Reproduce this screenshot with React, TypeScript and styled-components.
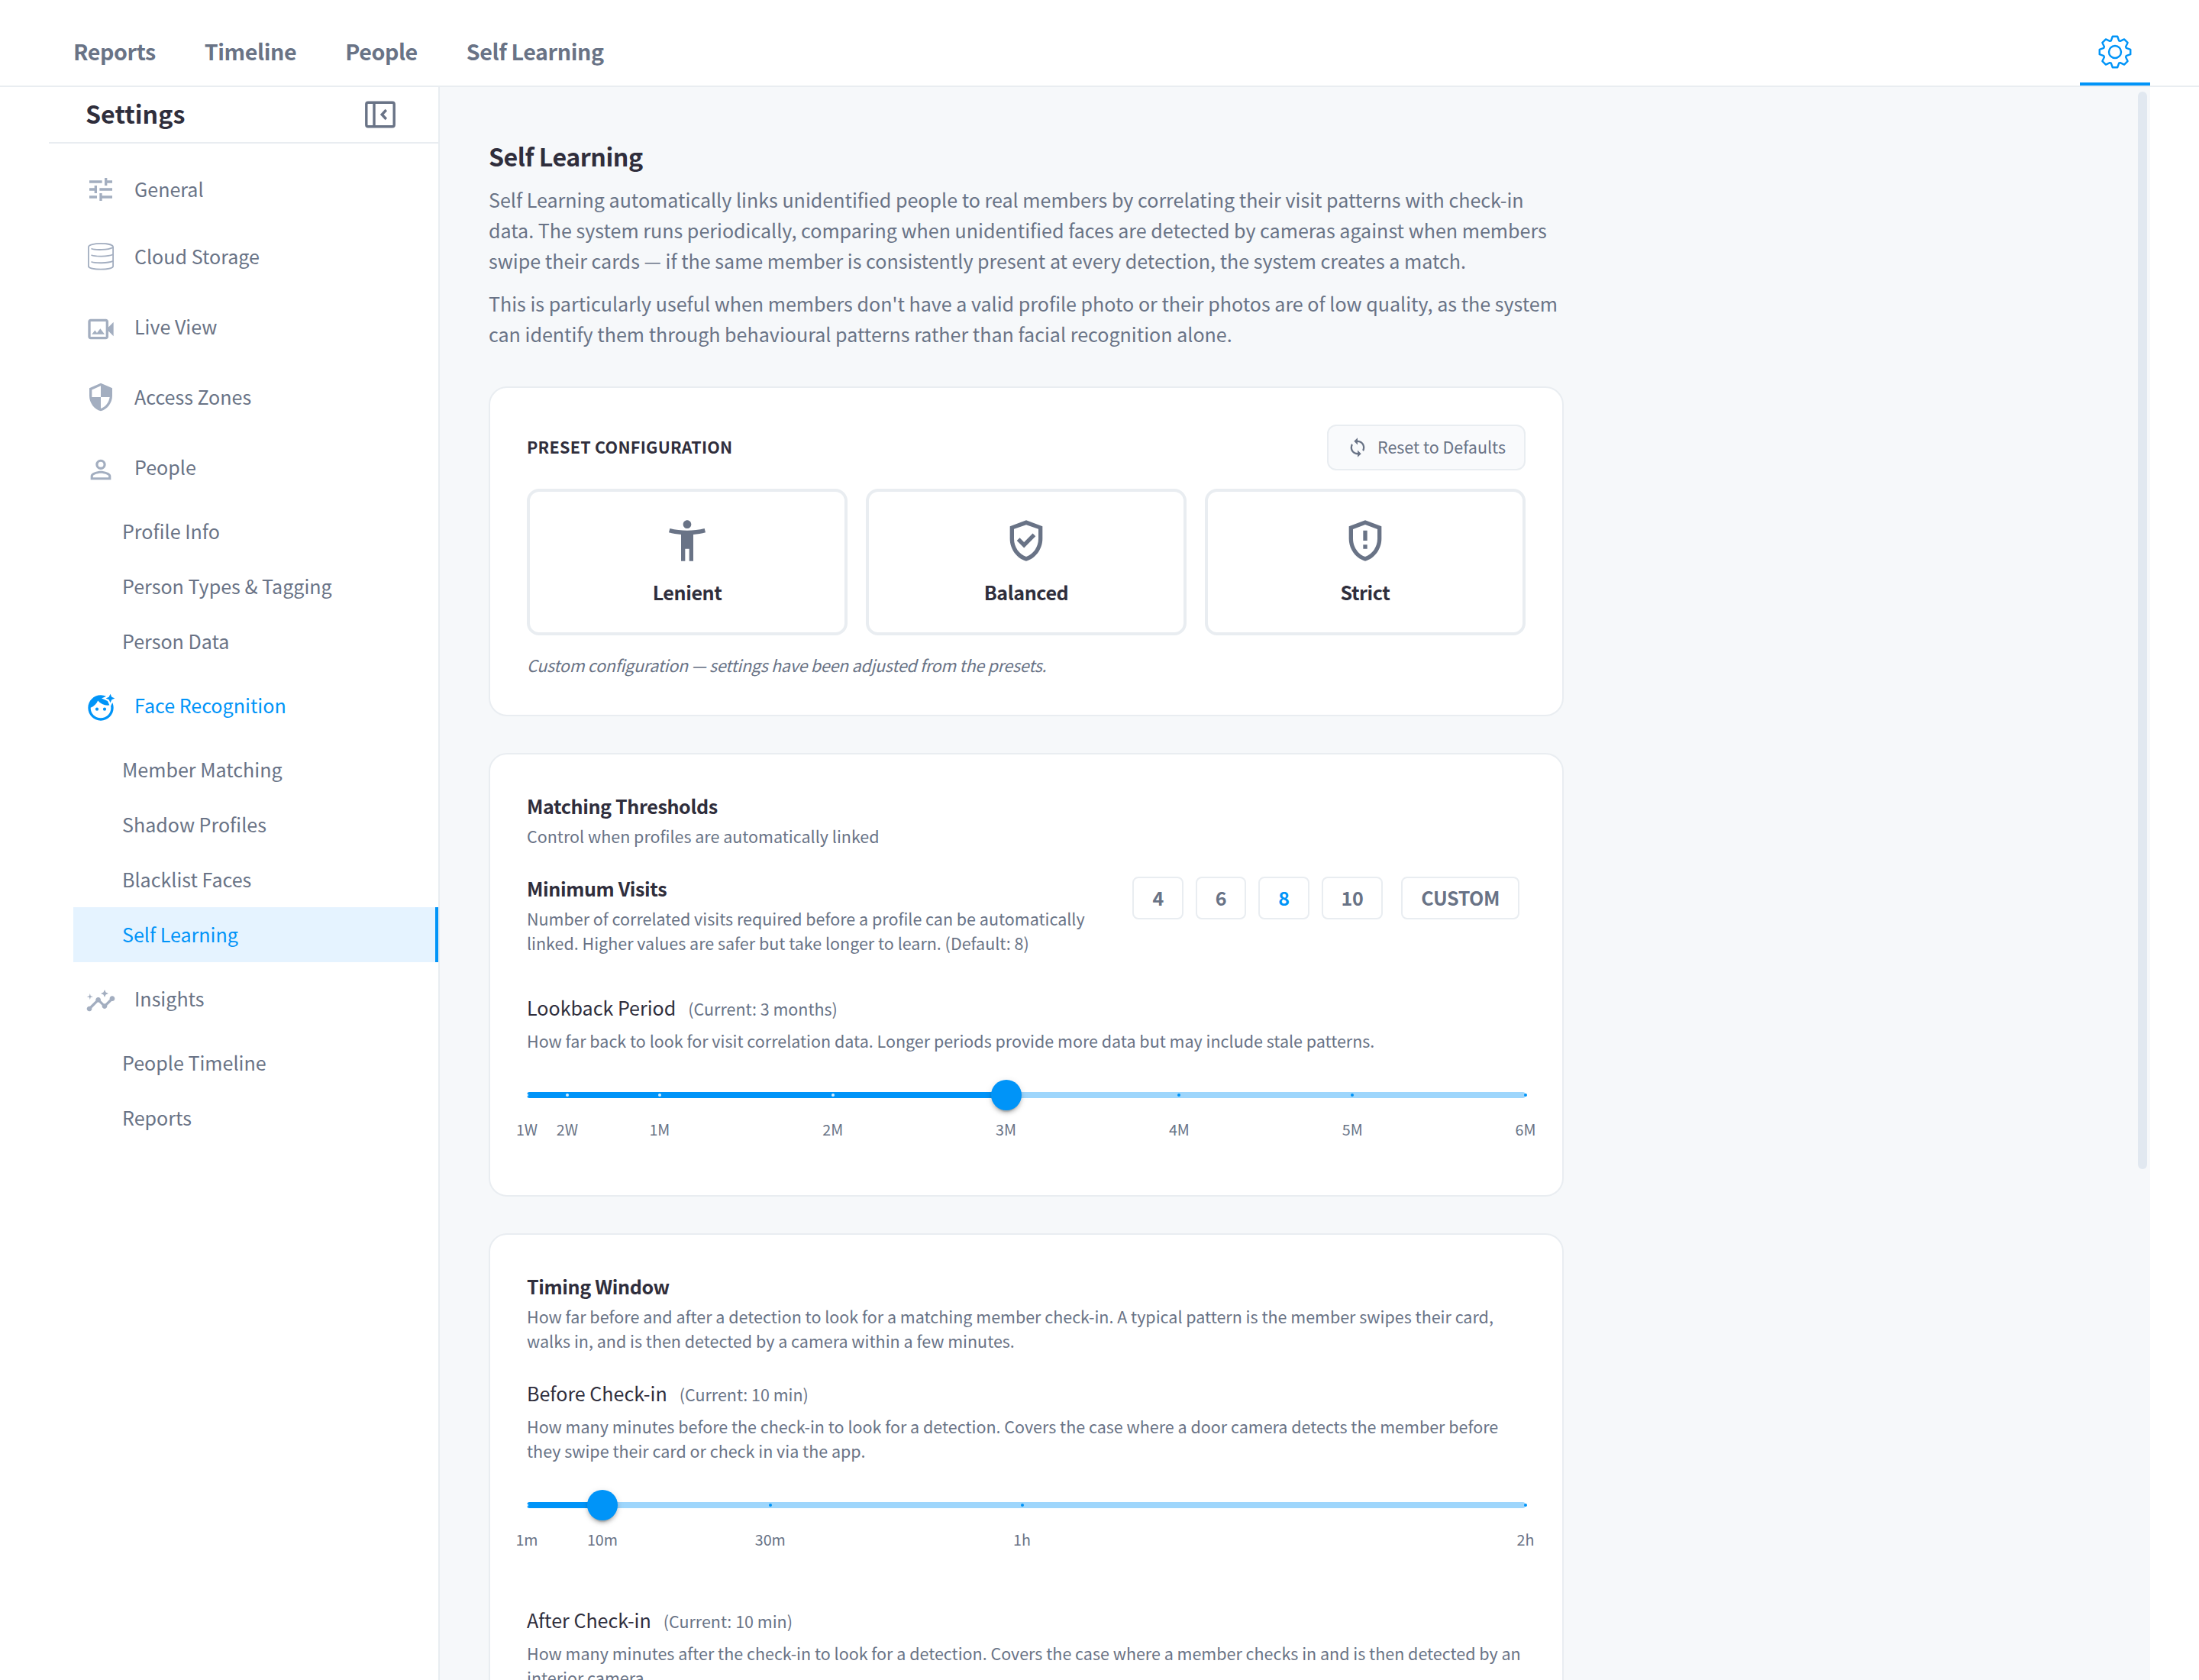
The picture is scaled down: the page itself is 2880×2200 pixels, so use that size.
import React from "react";
import styled, { createGlobalStyle } from "styled-components";
import {
  MdTune,
  MdOutlineVideoCameraBack,
  MdSecurity,
  MdPersonOutline,
  MdFaceRetouchingNatural,
  MdInsights,
  MdSync,
  MdAccessibilityNew,
  MdOutlineGppGood,
  MdOutlineGppMaybe,
} from "react-icons/md";

const color = {
  ink: "#2f2e3c",
  text: "#697386",
  icon: "#a3aec0",
  line: "#e9edf1",
  blue: "#0094f8",
  blueSoft: "#e5f3ff",
  rail: "#9ed6fc",
  page: "#f6f8fa",
  button: "#f9fafc",
  thumb: "#e1e8f0",
};

const GlobalStyle = createGlobalStyle`
  *, *::before, *::after { box-sizing: border-box; }
  body {
    margin: 0;
    background: #fff;
    color: ${color.text};
    font-family: "Noto Sans CJK SC", "Noto Sans CJK JP", "Noto Sans", sans-serif;
    font-size: 25.07px;
    line-height: 40px;
  }
  h1, h2, h3, p { margin: 0; font-weight: 400; }
  svg { display: block; flex: none; }
`;

const Page = styled.div`
  width: 2880px;
  height: 2200px;
  overflow: hidden;
  display: flex;
  flex-direction: column;
  background: #fff;
`;

/* ---------- header ---------- */

const Header = styled.header`
  flex: none;
  height: 114px;
  padding: 0 64px 0 96px;
  border-bottom: 2px solid ${color.line};
  display: flex;
  justify-content: space-between;
  align-items: stretch;
`;

const Nav = styled.nav`
  display: flex;
  align-items: center;
  gap: 64px;
  padding-top: 22px;
`;

const NavLink = styled.a`
  font-size: 28.65px;
  font-weight: 600;
  letter-spacing: -0.014em;
`;

const SettingsTab = styled.button`
  width: 92px;
  padding: 28px 0 0;
  border: 0;
  border-bottom: 4px solid ${color.blue};
  background: none;
  color: ${color.blue};
  display: flex;
  align-items: center;
  justify-content: center;
`;

/* ---------- sidebar ---------- */

const Body = styled.div`
  flex: 1;
  min-height: 0;
  display: flex;
  padding: 0 64px;
`;

const Sidebar = styled.aside`
  flex: none;
  width: 512px;
  border-right: 2px solid ${color.line};
`;

const SidebarHead = styled.div`
  height: 74px;
  padding: 0 56px 0 48px;
  border-bottom: 2px solid ${color.line};
  display: flex;
  align-items: center;
  justify-content: space-between;
  color: ${color.text};
`;

const SidebarTitle = styled.h2`
  padding-bottom: 5px;
  font-size: 32.2px;
  font-weight: 700;
  color: ${color.ink};
`;

const Menu = styled.ul`
  list-style: none;
  margin: 0;
  padding: 16px 0 0 32px;
`;

const Group = styled.li<{ $tall?: boolean; $active?: boolean }>`
  height: ${(p) => (p.$tall ? 96 : 88)}px;
  padding: 0 0 2px 16px;
  display: flex;
  align-items: center;
  gap: 24px;
  color: ${(p) => (p.$active ? color.blue : color.text)};
`;

const GroupIcon = styled.span<{ $drop?: boolean; $active?: boolean }>`
  width: 40px;
  height: 40px;
  margin-top: ${(p) => (p.$drop ? 8 : 2)}px;
  display: flex;
  align-items: center;
  justify-content: center;
  color: ${(p) => (p.$active ? color.blue : color.icon)};
`;

const SubItem = styled.li<{ $active?: boolean }>`
  height: 72px;
  padding: 0 0 2px 64px;
  display: flex;
  align-items: center;
  color: ${(p) => (p.$active ? color.blue : color.text)};
  background: ${(p) => (p.$active ? color.blueSoft : "transparent")};
  border-right: 4px solid ${(p) => (p.$active ? color.blue : "transparent")};
`;

/* ---------- content ---------- */

const Main = styled.main`
  flex: 1;
  min-width: 0;
  display: flex;
  justify-content: space-between;
  padding: 6px 4px 0 64px;
  background: ${color.page};
`;

const ScrollThumb = styled.div`
  flex: none;
  width: 12px;
  height: 1411px;
  border-radius: 6px;
  background: ${color.thumb};
`;

const Content = styled.div`
  width: 1408px;
  padding-top: 56px;
  display: flex;
  flex-direction: column;
`;

const PageTitle = styled.h1`
  font-size: 32.2px;
  font-weight: 600;
  letter-spacing: -0.015em;
  line-height: 56px;
  color: ${color.ink};
  margin-bottom: 9px;
`;

const Intro = styled.div`
  display: flex;
  flex-direction: column;
  gap: 16px;
  margin-bottom: 49px;
  white-space: pre-line;
`;

const Card = styled.section`
  flex: none;
  margin-bottom: 48px;
  padding: 47px 48px 49px;
  border: 2px solid ${color.line};
  border-radius: 24px;
  background: #fff;
  display: flex;
  flex-direction: column;
`;

const CardBar = styled.div`
  display: flex;
  align-items: center;
  justify-content: space-between;
  height: 60px;
  margin: 1px 0 24px;
`;

const Eyebrow = styled.h3`
  padding-bottom: 2px;
  font-size: 21.5px;
  font-weight: 600;
  letter-spacing: 0.27px;
  color: ${color.ink};
`;

const ResetButton = styled.button`
  height: 60px;
  padding: 0 24px 2px;
  border: 2px solid ${color.line};
  border-radius: 12px;
  background: ${color.button};
  color: ${color.text};
  font: inherit;
  font-size: 21.5px;
  display: flex;
  align-items: center;
  gap: 12px;

  svg { margin-top: 2px; }
`;

const Presets = styled.div`
  display: grid;
  grid-template-columns: repeat(3, 1fr);
  gap: 24px;
`;

const Preset = styled.div`
  height: 192px;
  border: 4px solid ${color.line};
  border-radius: 16px;
  padding: 32px 0;
  display: flex;
  flex-direction: column;
  align-items: center;
  gap: 15px;
`;

const PresetName = styled.span`
  font-weight: 600;
  letter-spacing: -0.016em;
  color: ${color.ink};
`;

const PresetNote = styled.p`
  margin-top: 23px;
  font-size: 21.5px;
  line-height: 32px;
  font-style: italic;
  letter-spacing: -0.26px;
`;

const Heading = styled.h3`
  font-size: 25.07px;
  font-weight: 600;
  letter-spacing: -0.015em;
  color: ${color.ink};
`;

const Hint = styled.p<{ $gap?: number }>`
  margin-top: ${(p) => p.$gap ?? 4}px;
  font-size: 21.49px;
  line-height: 32px;
  white-space: pre-line;
`;

const OptionRow = styled.div`
  display: flex;
  justify-content: space-between;
  margin-top: 32px;
`;

const Options = styled.div`
  display: flex;
  gap: 16px;
  padding: 5px 8px 0 0;
`;

const Option = styled.button<{ $active?: boolean; $apart?: boolean }>`
  height: 56px;
  padding: 0 24px 2px;
  margin-left: ${(p) => (p.$apart ? 8 : 0)}px;
  border: 2px solid ${color.line};
  border-radius: 8px;
  background: #fff;
  font: inherit;
  font-weight: 600;
  letter-spacing: -0.016em;
  color: ${(p) => (p.$active ? color.blue : color.text)};
`;

const Field = styled.div<{ $gap: number }>`
  margin-top: ${(p) => p.$gap}px;
`;

const FieldHead = styled.div`
  height: 40px;
  display: flex;
  align-items: baseline;
  gap: 16px;
  color: ${color.ink};
`;

const FieldValue = styled.span`
  font-size: 21.48px;
  color: ${color.text};
`;

const SliderBox = styled.div`
  height: 136.5px;
  padding-top: 51px;
`;

const Rail = styled.div`
  position: relative;
  height: 8px;
  border-radius: 4px;
  background: ${color.rail};
`;

const Track = styled.div`
  height: 8px;
  border-radius: 4px 0 0 4px;
  background: ${color.blue};
`;

const Mark = styled.span<{ $on: boolean }>`
  position: absolute;
  top: 2px;
  width: 4px;
  height: 4px;
  margin-left: -2px;
  border-radius: 2px;
  background: ${(p) => (p.$on ? "rgba(255,255,255,0.85)" : color.blue)};
`;

const Thumb = styled.span`
  position: absolute;
  top: -16px;
  width: 40px;
  height: 40px;
  margin-left: -20px;
  border-radius: 50%;
  background: ${color.blue};
  box-shadow: 0 6px 2px -4px rgba(0, 0, 0, 0.2), 0 4px 4px rgba(0, 0, 0, 0.14),
    0 2px 10px rgba(0, 0, 0, 0.12);
`;

const MarkLabel = styled.span`
  position: absolute;
  top: 29px;
  transform: translateX(-50%);
  font-size: 19.7px;
`;

/* ---------- icons ---------- */

const GearIcon = () => {
  const at = (r: number, deg: number) => {
    const a = ((deg - 90) * Math.PI) / 180;
    return `${(22 + r * Math.cos(a)).toFixed(2)} ${(22 + r * Math.sin(a)).toFixed(2)}`;
  };
  const teeth = Array.from({ length: 8 }, (_, i) => {
    const c = i * 45;
    return `${i ? "L" : "M"}${at(15.6, c - 19.5)}L${at(20.5, c - 9)}L${at(20.5, c + 9)}L${at(15.6, c + 19.5)}`;
  });
  return (
    <svg width="44" height="44" viewBox="0 0 44 44" fill="none" stroke="currentColor" strokeWidth="2.4" strokeLinejoin="round">
      <path d={`${teeth.join("")}Z`} />
      <circle cx="22" cy="22" r="8" />
    </svg>
  );
};

const CollapseIcon = () => (
  <svg width="40" height="36" viewBox="0 0 40 36" fill="none" stroke="currentColor" strokeWidth="3.4">
    <rect x="1.8" y="2.2" width="36.4" height="31.6" rx="2.2" />
    <path d="M12 2.2v31.6" />
    <path d="M27.8 12l-5.6 6 5.6 6" />
  </svg>
);

const StorageIcon = () => (
  <svg width="34" height="36" viewBox="0 0 34 36" fill="none" stroke="currentColor" strokeWidth="1.8">
    <path d="M.9 5.5C.9-.6 33.1-.6 33.1 5.5V30.5C33.1 36 .9 36 .9 30.5z" />
    <path d="M4.5 7.5c5 2.200 22 2.200 28.500-1.500M4.500 16c5 2.200 22 2.200 28.500-.8M4.500 24.700c5 2.200 22 2.200 28.500-.8" />
  </svg>
);

/* ---------- slider ---------- */

type Stop = { at: number; label: string };

const Slider = ({ stops, value }: { stops: Stop[]; value: number }) => {
  const min = stops[0].at;
  const max = stops[stops.length - 1].at;
  const pct = (v: number) => `${((v - min) / (max - min)) * 100}%`;
  return (
    <SliderBox>
      <Rail>
        <Track style={{ width: pct(value) }} />
        {stops.map((s) => (
          <Mark key={s.label} $on={s.at <= value} style={{ left: pct(s.at) }} />
        ))}
        {stops.map((s) => (
          <MarkLabel key={s.label} style={{ left: pct(s.at) }}>
            {s.label}
          </MarkLabel>
        ))}
        <Thumb style={{ left: pct(value) }} />
      </Rail>
    </SliderBox>
  );
};

const lookback: Stop[] = [
  { at: 7, label: "1W" },
  { at: 14, label: "2W" },
  { at: 30, label: "1M" },
  { at: 60, label: "2M" },
  { at: 90, label: "3M" },
  { at: 120, label: "4M" },
  { at: 150, label: "5M" },
  { at: 180, label: "6M" },
];

const minutes: Stop[] = [
  { at: 1, label: "1m" },
  { at: 10, label: "10m" },
  { at: 30, label: "30m" },
  { at: 60, label: "1h" },
  { at: 120, label: "2h" },
];

export default function App() {
  return (
    <Page>
      <GlobalStyle />
      <Header>
        <Nav>
          <NavLink>Reports</NavLink>
          <NavLink>Timeline</NavLink>
          <NavLink>People</NavLink>
          <NavLink>Self Learning</NavLink>
        </Nav>
        <SettingsTab>
          <GearIcon />
        </SettingsTab>
      </Header>
      <Body>
        <Sidebar>
          <SidebarHead>
            <SidebarTitle>Settings</SidebarTitle>
            <CollapseIcon />
          </SidebarHead>
          <Menu>
            <Group>
              <GroupIcon><MdTune size={40} /></GroupIcon>General
            </Group>
            <Group>
              <GroupIcon><StorageIcon /></GroupIcon>Cloud Storage
            </Group>
            <Group $tall>
              <GroupIcon $drop><MdOutlineVideoCameraBack size={40} /></GroupIcon>Live View
            </Group>
            <Group>
              <GroupIcon><MdSecurity size={40} /></GroupIcon>Access Zones
            </Group>
            <Group $tall>
              <GroupIcon $drop><MdPersonOutline size={40} /></GroupIcon>People
            </Group>
            <SubItem>Profile Info</SubItem>
            <SubItem>Person Types &amp; Tagging</SubItem>
            <SubItem>Person Data</SubItem>
            <Group $tall $active>
              <GroupIcon $drop $active><MdFaceRetouchingNatural size={40} /></GroupIcon>Face Recognition
            </Group>
            <SubItem>Member Matching</SubItem>
            <SubItem>Shadow Profiles</SubItem>
            <SubItem>Blacklist Faces</SubItem>
            <SubItem $active>Self Learning</SubItem>
            <Group $tall>
              <GroupIcon $drop><MdInsights size={40} /></GroupIcon>Insights
            </Group>
            <SubItem>People Timeline</SubItem>
            <SubItem>Reports</SubItem>
          </Menu>
        </Sidebar>
        <Main>
          <Content>
            <PageTitle>Self Learning</PageTitle>
            <Intro>
              <p>
                {"Self Learning automatically links unidentified people to real members by correlating their visit patterns with check-in\ndata. The system runs periodically, comparing when unidentified faces are detected by cameras against when members\nswipe their cards — if the same member is consistently present at every detection, the system creates a match."}
              </p>
              <p>
                {"This is particularly useful when members don't have a valid profile photo or their photos are of low quality, as the system\ncan identify them through behavioural patterns rather than facial recognition alone."}
              </p>
            </Intro>

            <Card>
              <CardBar>
                <Eyebrow>PRESET CONFIGURATION</Eyebrow>
                <ResetButton>
                  <MdSync size={28} />
                  Reset to Defaults
                </ResetButton>
              </CardBar>
              <Presets>
                <Preset>
                  <MdAccessibilityNew size={64} color={color.text} />
                  <PresetName>Lenient</PresetName>
                </Preset>
                <Preset>
                  <MdOutlineGppGood size={64} color={color.text} />
                  <PresetName>Balanced</PresetName>
                </Preset>
                <Preset>
                  <MdOutlineGppMaybe size={64} color={color.text} />
                  <PresetName>Strict</PresetName>
                </Preset>
              </Presets>
              <PresetNote>Custom configuration — settings have been adjusted from the presets.</PresetNote>
            </Card>

            <Card>
              <Heading>Matching Thresholds</Heading>
              <Hint>Control when profiles are automatically linked</Hint>
              <OptionRow>
                <div>
                  <Heading>Minimum Visits</Heading>
                  <Hint>
                    {"Number of correlated visits required before a profile can be automatically\nlinked. Higher values are safer but take longer to learn. (Default: 8)"}
                  </Hint>
                </div>
                <Options>
                  <Option>4</Option>
                  <Option>6</Option>
                  <Option $active>8</Option>
                  <Option>10</Option>
                  <Option $apart>CUSTOM</Option>
                </Options>
              </OptionRow>
              <Field $gap={48}>
                <FieldHead>
                  Lookback Period <FieldValue>(Current: 3 months)</FieldValue>
                </FieldHead>
                <Hint $gap={8}>
                  How far back to look for visit correlation data. Longer periods provide more data but may include stale patterns.
                </Hint>
                <Slider stops={lookback} value={90} />
              </Field>
            </Card>

            <Card>
              <Heading>Timing Window</Heading>
              <Hint>
                {"How far before and after a detection to look for a matching member check-in. A typical pattern is the member swipes their card,\nwalks in, and is then detected by a camera within a few minutes."}
              </Hint>
              <Field $gap={32}>
                <FieldHead>
                  Before Check-in <FieldValue>(Current: 10 min)</FieldValue>
                </FieldHead>
                <Hint $gap={8}>
                  {"How many minutes before the check-in to look for a detection. Covers the case where a door camera detects the member before\nthey swipe their card or check in via the app."}
                </Hint>
                <Slider stops={minutes} value={10} />
              </Field>
              <Field $gap={49}>
                <FieldHead>
                  After Check-in <FieldValue>(Current: 10 min)</FieldValue>
                </FieldHead>
                <Hint $gap={8}>
                  {"How many minutes after the check-in to look for a detection. Covers the case where a member checks in and is then detected by an\ninterior camera."}
                </Hint>
              </Field>
            </Card>
          </Content>
          <ScrollThumb />
        </Main>
      </Body>
    </Page>
  );
}
